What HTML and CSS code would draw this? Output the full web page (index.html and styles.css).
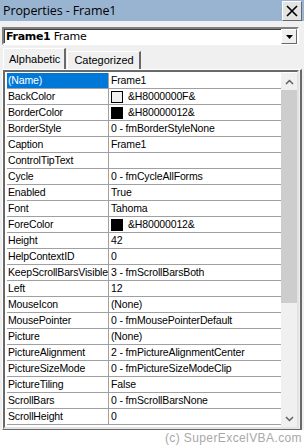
FILE: index.html
```html
<!DOCTYPE html>
<html lang="en">
<head>
    <meta charset="UTF-8">
    <title>Properties - Frame1</title>
    <link rel="stylesheet" href="styles.css">
</head>
<body>

    <!-- Title bar -->
    <div class="titlebar">
        <span class="title">Properties - Frame1</span>
        <div class="close">
            <svg width="12" height="12" viewBox="0 0 12 12"><path d="M1 1 L11 11 M11 1 L1 11" stroke="#000" stroke-width="1.6"/></svg>
        </div>
    </div>

    <!-- Object combo -->
    <div class="combo">
        <span class="combo-text"><b>Frame1</b> Frame</span>
        <div class="combo-btn">
            <svg width="7" height="4" viewBox="0 0 7 4"><path d="M0 0 H7 L3.5 4 Z" fill="#000"/></svg>
        </div>
    </div>

    <!-- Tabs -->
    <div class="tabs">
        <div class="tab active">Alphabetic</div>
        <div class="tab">Categorized</div>
    </div>

    <!-- Property grid -->
    <div class="panel">
        <div class="grid">
            <div class="rows">
                <div class="row selected"><div class="name">(Name)</div><div class="value">Frame1</div></div>
                <div class="row"><div class="name">BackColor</div><div class="value"><span class="swatch light"></span>&amp;H8000000F&amp;</div></div>
                <div class="row"><div class="name">BorderColor</div><div class="value"><span class="swatch dark"></span>&amp;H80000012&amp;</div></div>
                <div class="row"><div class="name">BorderStyle</div><div class="value">0 - fmBorderStyleNone</div></div>
                <div class="row"><div class="name">Caption</div><div class="value">Frame1</div></div>
                <div class="row"><div class="name">ControlTipText</div><div class="value"></div></div>
                <div class="row"><div class="name">Cycle</div><div class="value">0 - fmCycleAllForms</div></div>
                <div class="row"><div class="name">Enabled</div><div class="value">True</div></div>
                <div class="row"><div class="name">Font</div><div class="value">Tahoma</div></div>
                <div class="row"><div class="name">ForeColor</div><div class="value"><span class="swatch dark"></span>&amp;H80000012&amp;</div></div>
                <div class="row"><div class="name">Height</div><div class="value">42</div></div>
                <div class="row"><div class="name">HelpContextID</div><div class="value">0</div></div>
                <div class="row"><div class="name">KeepScrollBarsVisible</div><div class="value">3 - fmScrollBarsBoth</div></div>
                <div class="row"><div class="name">Left</div><div class="value">12</div></div>
                <div class="row"><div class="name">MouseIcon</div><div class="value">(None)</div></div>
                <div class="row"><div class="name">MousePointer</div><div class="value">0 - fmMousePointerDefault</div></div>
                <div class="row"><div class="name">Picture</div><div class="value">(None)</div></div>
                <div class="row"><div class="name">PictureAlignment</div><div class="value">2 - fmPictureAlignmentCenter</div></div>
                <div class="row"><div class="name">PictureSizeMode</div><div class="value">0 - fmPictureSizeModeClip</div></div>
                <div class="row"><div class="name">PictureTiling</div><div class="value">False</div></div>
                <div class="row"><div class="name">ScrollBars</div><div class="value">0 - fmScrollBarsNone</div></div>
                <div class="row"><div class="name">ScrollHeight</div><div class="value">0</div></div>
            </div>
            <div class="scrollbar">
                <div class="arrow">
                    <svg width="9" height="6" viewBox="0 0 9 6"><path d="M1 5 L4.5 1.5 L8 5" stroke="#606060" stroke-width="1.5" fill="none"/></svg>
                </div>
                <div class="thumb"></div>
                <div class="track"></div>
                <div class="arrow">
                    <svg width="9" height="6" viewBox="0 0 9 6"><path d="M1 1 L4.5 4.5 L8 1" stroke="#606060" stroke-width="1.5" fill="none"/></svg>
                </div>
            </div>
        </div>
    </div>

    <div class="footer">(c) SuperExcelVBA.com</div>

</body>
</html>
```

FILE: styles.css
```css
* {
    margin: 0;
    padding: 0;
    box-sizing: border-box;
}

body {
    width: 304px;
    height: 445px;
    overflow: hidden;
    background-color: #f0f0f0;
    font-family: "Liberation Sans", Arial, sans-serif;
    font-size: 11px;
    color: #000;
}

.titlebar {
    height: 21px;
    background-color: #99b4d1;
    display: flex;
    align-items: center;
    justify-content: space-between;
    padding-left: 3px;
    padding-right: 2px;
}

.title {
    font-family: "Open Sans", sans-serif;
    font-size: 12.5px;
    letter-spacing: -0.1px;
}

.close {
    width: 20px;
    height: 20px;
    margin-top: 1px;
    background-color: #e3e3e3;
    border: 1px solid #fff;
    border-right-color: #696969;
    border-bottom-color: #696969;
    display: flex;
    align-items: center;
    justify-content: center;
}

.combo {
    margin: 6px 5px 0 2px;
    height: 18px;
    background-color: #fff;
    border: 2px solid #fff;
    border-top-color: #808080;
    border-left-color: #808080;
    box-shadow: inset 1px 1px 0 #404040;
    display: flex;
    align-items: center;
    justify-content: space-between;
}

.combo-text {
    padding-left: 2px;
    font-family: "DejaVu Sans", sans-serif;
    font-size: 11px;
    letter-spacing: -0.3px;
}

.combo-btn {
    width: 16px;
    height: 15px;
    margin-top: 1px;
    background-color: #f0f0f0;
    border: 1px solid #fff;
    border-right-color: #696969;
    border-bottom-color: #696969;
    display: flex;
    align-items: center;
    justify-content: center;
}

.tabs {
    display: flex;
    align-items: flex-end;
    height: 24px;
    padding-left: 3px;
}

.tab {
    height: 18px;
    padding: 0 5px 0 6px;
    line-height: 17px;
    font-size: 11px;
    border: 1px solid #fff;
    border-bottom: none;
    border-right: 2px solid #696969;
    margin-left: 1px;
}

.tab.active {
    height: 21px;
    line-height: 20px;
    margin-left: 0;
    padding: 0 4px 0 5px;
}

.panel {
    height: 361px;
    margin: 0 2px 0 2px;
    border: 1px solid #fff;
    border-right: 2px solid #696969;
    border-bottom: 1px solid #696969;
    padding: 0 1px 0 0;
}

.grid {
    height: 100%;
    display: flex;
    border: 2px solid #fff;
    border-top-color: #696969;
    border-left-color: #696969;
    border-right-color: #e3e3e3;
    border-bottom-color: #e3e3e3;
    background-color: #fff;
    padding: 1px 0 0 1px;
}

.rows {
    flex: 1;
    padding-left: 1px;
    font-size: 10.5px;
    letter-spacing: -0.15px;
}

.row {
    display: flex;
    height: 16px;
    border-bottom: 1px solid #a0a0a0;
}

.name {
    width: 102px;
    line-height: 15px;
    padding-left: 1px;
    border-right: 1px solid #a0a0a0;
    white-space: nowrap;
    overflow: hidden;
}

.value {
    flex: 1;
    line-height: 15px;
    padding-left: 2px;
    display: flex;
    align-items: center;
    white-space: nowrap;
    overflow: hidden;
}

.row.selected .name {
    background-color: #0078d7;
    color: #fff;
}

.swatch {
    width: 12px;
    height: 12px;
    border: 1px solid #000;
    margin-right: 5px;
}

.swatch.light {
    background-color: #f0f0f0;
}

.swatch.dark {
    background-color: #000;
}

.scrollbar {
    width: 16px;
    display: flex;
    flex-direction: column;
    background-color: #f0f0f0;
}

.arrow {
    height: 17px;
    display: flex;
    align-items: center;
    justify-content: center;
}

.thumb {
    height: 213px;
    background-color: #cdcdcd;
}

.track {
    flex: 1;
}

.footer {
    height: 16px;
    background-color: #fff;
    text-align: right;
    padding-right: 2px;
    color: #a8a8a8;
    font-size: 12px;
    letter-spacing: 0.4px;
    line-height: 16px;
}
```
